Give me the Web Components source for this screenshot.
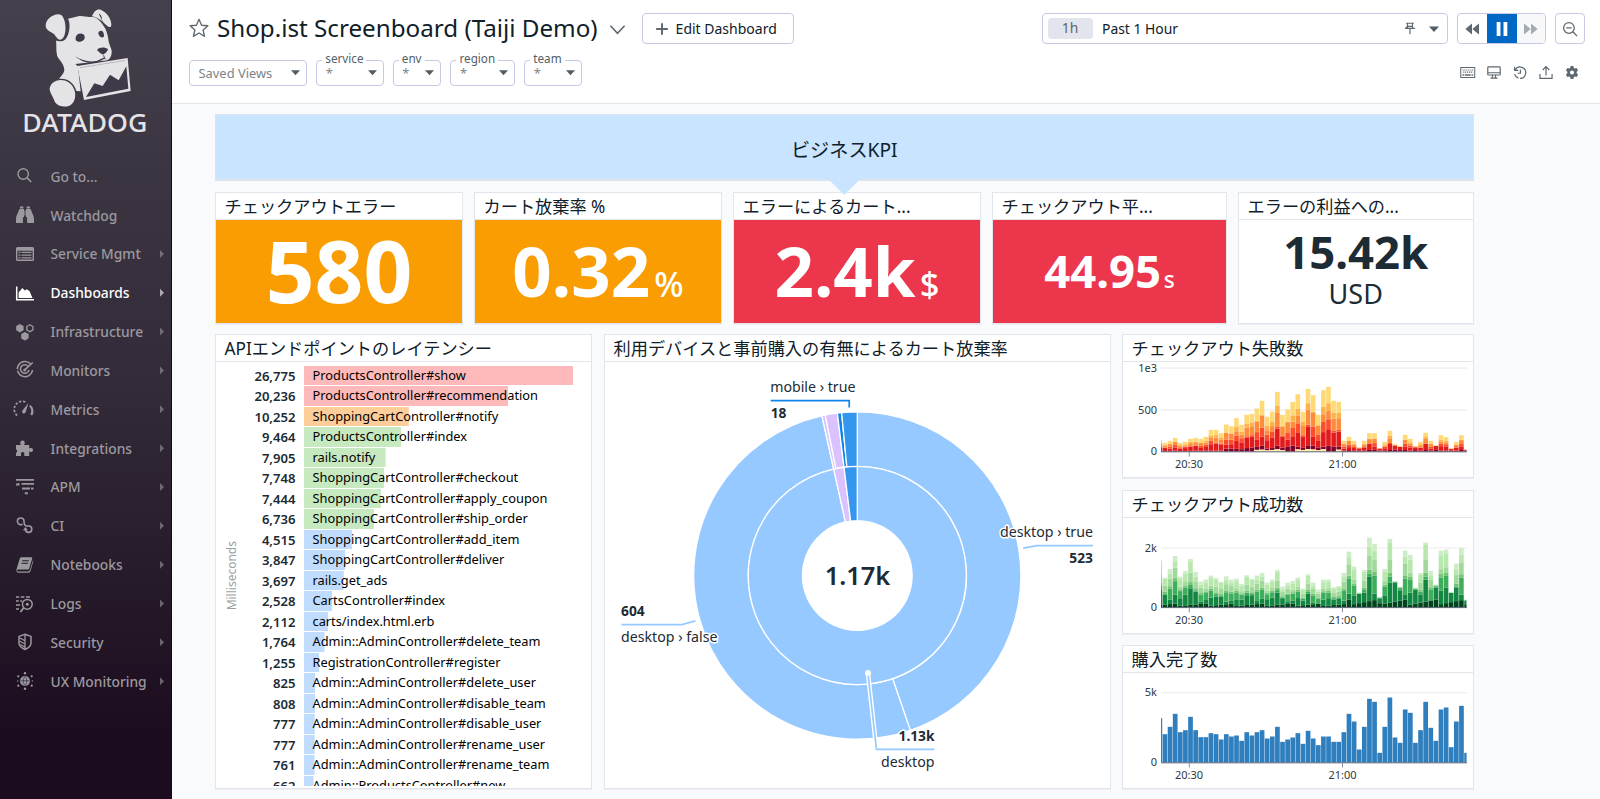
<!DOCTYPE html>
<html lang="ja">
<head>
<meta charset="utf-8">
<title>Shop.ist Screenboard</title>
<style>
html,body{margin:0;height:100%;overflow:hidden}
body{font-family:"Noto Sans","Noto Sans CJK JP",sans-serif;color:#1c2b34;background:#f9fafc}
</style>
</head>
<body>
<dd-app></dd-app>
<script>
const define=(name,css,html,setup)=>{
  customElements.define(name,class extends HTMLElement{
    connectedCallback(){
      if(this.shadowRoot)return;
      const r=this.attachShadow({mode:"open"});
      const h=typeof html==="function"?html(this):html;
      r.innerHTML=`<style>*{box-sizing:border-box}${css}</style>${h}`;
      if(setup)setup(this,r);
    }
  });
};

const ICONS={
search:'<circle cx="7.2" cy="7" r="5.2" fill="none" stroke="currentColor" stroke-width="1.4"/><path d="M11 10.8 15.2 15" stroke="currentColor" stroke-width="1.6" fill="none"/>',
binoculars:'<path d="M3.7 3H8v8.2H6.9V17H0v-4.2C0 9 2.600 6.500 2.800 4zM14.300 3H10v8.200h1.100V17H18v-4.200c0-3.800-2.600-6.300-2.800-8.800zM4 .6h3.400v1.800H4zM10.600.6H14v1.800h-3.400zM8.400 4.500h1.200v5H8.400z" fill="currentColor"/>',
service:'<path d="M1.5 2h15A1.500 1.500 0 0 1 18 3.500v11a1.500 1.500 0 0 1-1.500 1.500h-15A1.500 1.500 0 0 1 0 14.500v-11A1.500 1.500 0 0 1 1.500 2zM1.400 5.800v8.700h15.200V5.800z" fill="currentColor" fill-rule="evenodd"/><path d="M2.500 7.400h2M5.500 7.400h10M2.500 10.100h2M5.500 10.100h10M2.500 12.800h2M5.500 12.800h10" stroke="currentColor" stroke-width="1.300"/>',
dashboards:'<path d="M.7 2.500v13.300H18" stroke="currentColor" stroke-width="1.500" fill="none"/><path d="M2.600 14V8.600L6.300 4l2.600 2.500 2-1.200 2.700 2 2.900 6.700z" fill="currentColor"/>',
infra:'<path d="M3.900.9l3.700 2.100v4.300L3.900 9.400.2 7.300V3zM8.900 9l3.700 2.100v4.300l-3.700 2.100-3.700-2.100v-4.300z" fill="currentColor"/><path d="M13.900 1.700l3.100 1.800v3.400l-3.100 1.800-3.100-1.800V3.500z" fill="none" stroke="currentColor" stroke-width="1.300"/>',
monitors:'<path d="M14.600 2.900A7.600 7.600 0 1 0 16.500 9M12.200 5.400A4.300 4.300 0 1 0 13 9" fill="none" stroke="currentColor" stroke-width="1.500"/><path d="M8.500 9.200 16.800 1.500" stroke="currentColor" stroke-width="1.600"/><circle cx="8.700" cy="9" r="1.500" fill="currentColor"/><path d="M0 9h2.500" stroke="#352e3a" stroke-width="1.500"/>',
metrics:'<path d="M1.100 15.500A8 8 0 0 1 10.500 2.600" fill="none" stroke="currentColor" stroke-width="1.700" stroke-dasharray="2.400 1.600"/><path d="M14.200 4.800A8 8 0 0 1 16.300 15.500L14.300 14.500A7 7 0 0 0 13.300 6.500z" fill="currentColor"/><path d="M12.500 3 9.800 11.800A1.900 1.900 0 1 1 6.800 10z" fill="currentColor"/>',
puzzle:'<path d="M0 6h5.200c-.9-.8-1-1.300-1-2.200a2.300 2.300 0 0 1 4.600 0c0 .9-.2 1.400-1 2.200h5.400v3.800c.8-.8 1.300-.7 2.400-.7a2.100 2.100 0 0 1 0 4c-1.100 0-1.600 0-2.400-.8V17H8.300v-2.800a1.700 1.700 0 0 0-3.300 0V17H0v-3.500h1v-2.800H0z" fill="currentColor"/>',
apm:'<path d="M0 1.900h18M2 5.900h1M5.500 5.900h12.500M6 10.500h8M8.800 15.300h3" stroke="currentColor" stroke-width="1.900" fill="none"/><path d="M0 6.500h3.500M15 10.500h2.500" stroke="currentColor" stroke-width="1.800"/>',
ci:'<path d="M6.600 7.600H4.700A3.300 3.300 0 1 1 8 4.300c0 2.500 0 4.700 3 4.700h1.600a3.200 3.200 0 1 1-3.200 3.200" fill="none" stroke="currentColor" stroke-width="1.600"/><path d="M6.900 13.200 9.400 10l2.500 3.200z" fill="currentColor"/>',
notebook:'<path d="M5.500 1.300h9.700a1 1 0 0 1 1 1.300l-3 9.800a1.500 1.500 0 0 1-1.400 1H2.200c-1.500 0-1.500 2 0 2h9.700c1 0 1.700-.4 2-1.300l3-9.600c.5.300.4.800.2 1.400l-2.600 9a2.700 2.700 0 0 1-2.600 1.900H2.900C.8 16.800-.1 15 .6 13L3.800 2.600a1.800 1.800 0 0 1 1.700-1.300z" fill="currentColor"/><path d="M6.300 4.700h6.500M5.600 7.200h6.500" stroke="#261c2a" stroke-width="1.100"/>',
logs:'<path d="M0 2h3.200M4.800 2h3.600M10 2h4M0 6h2.800M4.200 6h1.800M0 10h4M0 14h3" stroke="currentColor" stroke-width="1.700"/><circle cx="11.300" cy="9.300" r="4.900" fill="none" stroke="currentColor" stroke-width="1.500"/><path d="M7.500 13 4.500 17" stroke="currentColor" stroke-width="1.800"/><circle cx="11.300" cy="9.300" r="1.500" fill="currentColor"/>',
security:'<path d="M9 1.200 15 3.400v6.400c0 3.500-3.200 5.600-6 6.700-2.800-1.100-6-3.200-6-6.700V3.400z" fill="none" stroke="currentColor" stroke-width="1.500"/><path d="M9 2v14M4 5l4.500 2.500M4 8.200l4.500 2.500M4.500 11.500 8.500 14" stroke="currentColor" stroke-width="1.300"/>',
ux:'<circle cx="9" cy="9" r="5" fill="currentColor"/><path d="M4.500 8.800h9M9 4.500c-2.500 3-2.500 6 0 9M9 4.500c2.500 3 2.500 6 0 9" stroke="#241828" stroke-width=".6" fill="none"/><g fill="currentColor"><circle cx="9" cy="1.300" r="1.200"/><circle cx="9" cy="16.700" r="1.200"/><circle cx="2.300" cy="4.300" r="1.100"/><circle cx="15.700" cy="4.300" r="1.100"/><circle cx="2.300" cy="13.700" r="1.100"/><circle cx="15.700" cy="13.700" r="1.100"/><circle cx="1.700" cy="9" r=".7"/><circle cx="16.300" cy="9" r=".7"/></g>',
star:'<path d="M9 1.200l2.300 5.300 5.700.5-4.300 3.800 1.300 5.700L9 13.500 4 16.500l1.300-5.700L1 7l5.700-.5z" fill="none" stroke="currentColor" stroke-width="1.200" stroke-linejoin="round"/>',
chevron:'<path d="M1.500 5 9 13l7.500-8" fill="none" stroke="currentColor" stroke-width="1.700"/>',
plus:'<path d="M9 1.500v15M1.500 9h15" stroke="currentColor" stroke-width="2.500"/>',
caret:'<path d="M0 4.500h18L9 14.500z" fill="currentColor"/>',
pin:'<path d="M4 2.200h10M5.800 2.200v6M12.200 2.200v6M2.500 8.900h13M4.500 8.900V6.500M9 9v7.500M5.800 6.200h6.400" fill="none" stroke="currentColor" stroke-width="1.500"/>',
rew:'<path d="M9 2v14L.5 9zM18 2v14L9.500 9z" fill="currentColor"/>',
ffw:'<path d="M0 2v14l8.500-7zM9 2v14l8.500-7z" fill="currentColor"/>',
pause:'<path d="M3 1h4.300v16H3zM10.700 1H15v16h-4.300z" fill="currentColor"/>',
zoomout:'<circle cx="7.800" cy="7.800" r="6" fill="none" stroke="currentColor" stroke-width="1.400"/><path d="M12.200 12.200 17 17M4.800 7.800h6" stroke="currentColor" stroke-width="1.500"/>',
keyboard:'<rect x=".6" y="3" width="16.800" height="12" fill="none" stroke="currentColor" stroke-width="1.200"/><path d="M2.600 6h13M3.600 8.600h12" stroke="currentColor" stroke-width="1.400" stroke-dasharray="1.300 1"/><path d="M2.600 12h2M5.500 12h7M13.500 12h2" stroke="currentColor" stroke-width="1.600"/>',
monitor:'<rect x="1" y="1.800" width="16" height="10.400" rx="1" fill="none" stroke="currentColor" stroke-width="1.500"/><path d="M1 9.300h16M7 12v3.500M11 12v3.500M4.500 16.200h9" stroke="currentColor" stroke-width="1.400"/>',
history:'<path d="M2 1.500v4.800h4.800M2.600 6A7.300 7.300 0 1 1 9 16.600M7 16.300A7.500 7.500 0 0 1 2 11" fill="none" stroke="currentColor" stroke-width="1.500"/><path d="M9.500 5v5H6" fill="none" stroke="currentColor" stroke-width="1.500"/>',
upload:'<path d="M1.200 11v5.600h15.600V11M9 13V2M4.800 5.800 9 1.500l4.200 4.300" fill="none" stroke="currentColor" stroke-width="1.500"/>',
gear:'<path fill-rule="evenodd" fill="currentColor" d="M7.200.8h3.600l.5 2.400 1.400.8 2.300-.8 1.800 3.100-1.800 1.700v2l1.800 1.700-1.800 3.100-2.300-.8-1.400.8-.5 2.400H7.200l-.5-2.400-1.400-.8-2.300.8-1.800-3.100L3 10V8L1.200 6.300 3 3.200l2.300.8 1.400-.8zM9 6.400a2.600 2.600 0 1 0 0 5.200 2.600 2.600 0 0 0 0-5.200z"/>'
};
define("dd-icon",":host{display:inline-flex;flex:none;width:18px;height:18px}svg{width:100%;height:100%;overflow:visible}",
  e=>`<svg viewBox="0 0 18 18">${ICONS[e.getAttribute("name")]}</svg>`);

define("dd-logo",":host{display:block;height:140px}svg{display:block;width:171px;height:140px}text{font-family:'Noto Sans';font-weight:500}",
`<svg viewBox="0 0 513 420">
<g fill="#e4e3e6">
<path d="M168 121C170 140 168 155 171 163C169 167 176 176 180 181C187 189 193 201 193 210C192 221 182 229 177 237C199 233 222 247 229 273L242 274L234 200C248 201 266 203 280 199C296 194 305 189 318 184C330 178 336 167 335 152C333 143 329 135 326 125C325 113 322 101 317 88C308 71 298 60 288 53L276 50C261 53 246 45 235 49L204 56C214 73 207 116 190 122C181 125 171 124 168 121Z"/>
<path d="M148 54C157 46 173 39 184 45C195 56 198 77 196 94C194 109 189 119 180 119C170 118 166 102 156 98C147 93 137 87 137 77C137 66 142 60 148 54Z"/>
<path d="M276 48C281 37 287 29 297 28C311 32 325 43 332 62C336 77 334 84 325 80C318 75 310 69 306 61C306 50 303 44 296 40C298 48 306 58 306 64C297 55 287 52 276 48Z"/>
<path d="M182 240C164 241 148 252 149 270C153 285 162 295 165 307C173 319 193 323 208 317C223 310 229 291 224 272C218 253 203 240 182 240Z"/>
</g>
<path d="M226 192L233 198L252 300L392 273L383 174Z" fill="#40394a"/>
<path fill-rule="evenodd" fill="#e4e3e6" d="M232 198L383 174L392 273L252 300ZM258 291L283 250L308 258L330 224L356 241L379 199L385 266Z"/>
<path d="M243 204L378 182L376 190L356 233L329 217L306 252L280 244L251 281Z" fill="#e4e3e6"/>
<path d="M240 203L376 181.500" stroke="#40394a" stroke-width="2" opacity=".35"/>
<g fill="#40394a">
<path d="M227 113C228 103 240 96 252 104C260 119 245 126 236 125C229 124 225 119 227 113Z"/>
<path d="M295 99C298 88 313 91 312 108C311 116 296 113 295 99Z"/>
<path d="M291 150C300 139 316 142 324 147C322 156 314 163 306 163C300 159 295 154 291 151Z"/>
<path d="M226 169C245 187 268 191 290 188L312 177L321 178L311 173L290 183C268 187 244 182 226 169ZM310 160L315 174L311 175Z"/>
</g>
<text x="67" y="396" font-size="76" fill="#e4e3e6" textLength="375" lengthAdjust="spacingAndGlyphs">DATADOG</text>
</svg>`);

define("dd-nav-item",`:host{display:flex;align-items:center;height:38.85px;padding:0 7px 0 16px;color:#9c999f;font-size:13.800px;font-weight:500}
:host([active]){color:#fff}span{flex:1;padding-left:16.500px;white-space:nowrap}i{width:4px;height:8px;background:currentColor;opacity:.6;clip-path:polygon(0 0,100% 50%,0 100%)}`,
e=>`<dd-icon name="${e.getAttribute("icon")}"></dd-icon><span><slot></slot></span>${e.hasAttribute("leaf")?"":"<i></i>"}`);

const NAV=[["search","Go to...",1],["binoculars","Watchdog",1],["service","Service Mgmt"],["dashboards","Dashboards"],["infra","Infrastructure"],["monitors","Monitors"],["metrics","Metrics"],["puzzle","Integrations"],["apm","APM"],["ci","CI"],["notebook","Notebooks"],["logs","Logs"],["security","Security"],["ux","UX Monitoring"]];
define("dd-sidebar",":host{display:block;width:172px;background:linear-gradient(#463f4c 0,#3b3441 22%,#332b39 48%,#261b2a 72%,#1c0c1f 92%);border-right:1px solid #150818}nav{padding-top:16.800px}",
`<dd-logo></dd-logo><nav>${NAV.map(n=>`<dd-nav-item icon="${n[0]}" ${n[2]?"leaf":""} ${n[1]==="Dashboards"?"active":""}>${n[1]}</dd-nav-item>`).join("")}</nav>`);

define("dd-select",`:host{display:block;flex:none;position:relative;height:26px;border:1px solid #c6c9e4;border-radius:4px;color:#7c848a;font-size:12.900px;background:#fff}
.v{display:flex;align-items:center;justify-content:space-between;height:100%;padding:0 6px 1px 8.500px}
label{position:absolute;left:5px;top:-10px;padding:0 3px;background:#fff;font-size:11.700px;line-height:15px;color:#545e66}
dd-icon{width:9px;height:9px;color:#525d66}`,
e=>`${e.getAttribute("label")?`<label>${e.getAttribute("label")}</label>`:""}<div class="v"><slot></slot><dd-icon name="caret"></dd-icon></div>`);

define("dd-time-picker",`:host{display:flex;align-items:center;width:406.500px;height:31px;border:1px solid #c6c9e4;border-radius:4px;padding:0 8px 0 5px;font-size:13.900px;color:#0f2029}
b{font-weight:400;width:45px;height:21px;line-height:20px;text-align:center;background:#e3e5ee;border-radius:4px;color:#5b666e;margin-right:9.500px}
span{flex:1}.p{width:14px;height:15px;color:#5d6870;margin-right:12.500px}.c{width:10px;height:10px;color:#525d66}`,
`<b>1h</b><span>Past 1 Hour</span><dd-icon class="p" name="pin"></dd-icon><dd-icon class="c" name="caret"></dd-icon>`);

define("dd-playback",`:host{display:flex;width:89px;height:31px;border:1px solid #c6c9e4;border-radius:4px;overflow:hidden}
div{flex:1;display:grid;place-items:center;color:#5d6870}.on{flex:none;width:30px;background:#0067c5;color:#fff;margin:-1px 0}.off{background:#f7f8fa;color:#a4abb0}
dd-icon{width:14px;height:16px}`,
`<div><dd-icon name="rew"></dd-icon></div><div class="on"><dd-icon name="pause" style="width:16px"></dd-icon></div><div class="off"><dd-icon name="ffw"></dd-icon></div>`);

define("dd-header",`:host{display:flex;justify-content:space-between;height:104px;background:#fff;border-bottom:1px solid #e3e5ea;padding:0 15px 0 17px}
.row{display:flex;align-items:center}.top{height:31px;margin-top:13px}
h1{margin:-1px 0 0 8px;font-size:24.200px;font-weight:400;line-height:30px;color:#0f2029;white-space:nowrap}
.star{width:20px;height:20px;color:#5d6870;margin-top:-1px}.chev{width:17px;height:17px;color:#5d6870;margin:2px 16px 0 11px}
.edit{display:flex;align-items:center;gap:7px;height:31px;width:152px;padding-left:12px;border:1px solid #c6c9e4;border-radius:4px;font-size:14px;color:#0f2029;white-space:nowrap}
.edit dd-icon{width:14px;height:14px;color:#5d6870}
.filters{gap:9px;margin-top:16px}
.right{display:flex;flex-direction:column;align-items:flex-end}.right .top{gap:9px}
.z{width:30px;height:31px;display:grid;place-items:center;border:1px solid #c6c9e4;border-radius:4px;color:#5d6870}.z dd-icon{width:16px;height:16px}
.tools{gap:12px;margin:21px 6px 0 0;color:#5d6870}.tools dd-icon{width:14px;height:15px}.tools .k{width:15.500px}`,
`<div><div class="row top"><dd-icon class="star" name="star"></dd-icon><h1>Shop.ist Screenboard (Taiji Demo)</h1><dd-icon class="chev" name="chevron"></dd-icon><div class="edit"><dd-icon name="plus"></dd-icon>Edit Dashboard</div></div>
<div class="row filters"><dd-select style="width:118.300px">Saved Views</dd-select><dd-select label="service" style="width:67.500px">*</dd-select><dd-select label="env" style="width:48.700px">*</dd-select><dd-select label="region" style="width:64.800px">*</dd-select><dd-select label="team" style="width:57.700px">*</dd-select></div></div>
<div class="right"><div class="row top"><dd-time-picker></dd-time-picker><dd-playback></dd-playback><div class="z"><dd-icon name="zoomout"></dd-icon></div></div>
<div class="row tools"><dd-icon class="k" name="keyboard"></dd-icon><dd-icon name="monitor"></dd-icon><dd-icon name="history"></dd-icon><dd-icon name="upload"></dd-icon><dd-icon name="gear"></dd-icon></div></div>`);

define("dd-banner",`:host{position:relative;z-index:1;display:grid;place-items:center;height:67px;background:#c9e4ff;border:1px solid #dde3ec;border-bottom-width:2px;font-size:19.200px;color:#0f2029;padding-top:3px}
i{position:absolute;left:50%;top:100%;margin:-1px 0 0 -17px;width:34px;height:17px;background:#c9e4ff;clip-path:polygon(0 0,100% 0,50% 100%)}`,`<slot></slot><i></i>`);

define("dd-widget",`:host{display:flex;flex-direction:column;background:#fff;border:1px solid #e3e5ec;box-shadow:0 1px 0 #eceef3;min-width:0;min-height:0}
h2{flex:none;margin:0;height:27px;line-height:27px;padding:0 9px 0 8.500px;font-size:17.200px;font-weight:400;color:#0f2029;border-bottom:1px solid #e3e5ec;white-space:nowrap;overflow:hidden}
div{flex:1;min-height:0;overflow:hidden;display:flex}::slotted(*){flex:1;min-width:0}`,
e=>`<h2>${e.getAttribute("name")}</h2><div><slot></slot></div>`);

define("dd-query-value",`:host{display:flex;align-items:center;justify-content:center}
.n{display:flex;align-items:baseline;line-height:1;font-weight:700;white-space:nowrap;margin-top:-1px}.u{font-weight:500}
:host([stack]) .n{flex-direction:column;align-items:center}`,
e=>{const s=+e.getAttribute("size"),st=e.hasAttribute("stack");
return `<div class="n" style="font-size:${s}px"><span>${e.getAttribute("value")}</span>${e.getAttribute("unit")?`<span class="u" style="font-size:${st?27:s/2}px;${st?"font-weight:400;line-height:37px":"margin-left:"+s*.06+"px"}">${e.getAttribute("unit")}</span>`:""}</div>`});

const TOP=[[26775,"ProductsController#show"],[20236,"ProductsController#recommendation"],[10252,"ShoppingCartController#notify"],[9464,"ProductsController#index"],[7905,"rails.notify"],[7748,"ShoppingCartController#checkout"],[7444,"ShoppingCartController#apply_coupon"],[6736,"ShoppingCartController#ship_order"],[4515,"ShoppingCartController#add_item"],[3847,"ShoppingCartController#deliver"],[3697,"rails.get_ads"],[2528,"CartsController#index"],[2112,"carts/index.html.erb"],[1764,"Admin::AdminController#delete_team"],[1255,"RegistrationController#register"],[825,"Admin::AdminController#delete_user"],[808,"Admin::AdminController#disable_team"],[777,"Admin::AdminController#disable_user"],[777,"Admin::AdminController#rename_user"],[761,"Admin::AdminController#rename_team"],[662,"Admin::ProductsController#new"]];
define("dd-toplist",`:host{display:flex;padding:3.500px 18px 0 0;margin-bottom:2px;font-size:12.800px;overflow:hidden}
.u{width:30px;display:flex;align-items:center;justify-content:center;font-size:12px;color:#9aa1a6}.u span{writing-mode:vertical-rl;transform:rotate(180deg)}
.l{flex:1}.r{display:flex;align-items:center;height:20.510px}b{width:49.500px;text-align:right;font-weight:600;font-size:13.100px;margin-right:8.500px}
.t{flex:1;height:19.500px;line-height:19px;padding-left:8.500px;white-space:nowrap;color:#000;margin-bottom:1px}`,
()=>`<div class="u"><span>Milliseconds</span></div><div class="l">${TOP.map(([v,n])=>{const c=v>2e4?"#febaba":v>1e4?"#fdcd9a":v>6e3?"#c7e9bf":"#bfdbfd";const w=(3+v/26775*267)/2.7;
return `<div class="r"><b>${v.toLocaleString("en-US")}</b><div class="t" style="background:linear-gradient(${c},${c}) 0 0/${w}% 100% no-repeat">${n}</div></div>`}).join("")}</div>`);

const CX=857.3,CY=576;
const pt=(r,a)=>{const t=a*Math.PI/180;return (CX+r*Math.sin(t)).toFixed(2)+" "+(CY-r*Math.cos(t)).toFixed(2)};
const arc=(r0,r1,a,b,f)=>{const l=b-a>180?1:0;return `<path d="M${pt(r1,a)}A${r1} ${r1} 0 ${l} 1 ${pt(r1,b)}L${pt(r0,b)}A${r0} ${r0} 0 ${l} 0 ${pt(r0,a)}Z" fill="${f}"/>`};
define("dd-sunburst",`:host{display:block}svg{display:block;width:100%;height:100%}text{font-size:14.200px;fill:#1c2b34;paint-order:stroke;stroke:#fff;stroke-width:3px;stroke-linejoin:round}.b{font-weight:700;font-size:13.800px}.m{font-size:25.500px;font-weight:600;stroke:none}.e{text-anchor:end}`,
()=>`<svg viewBox="605 362 505 427"><g stroke="#fff" stroke-width="1.300">
${arc(109.300,164,0,161.100,"#96c9ff")}${arc(109.300,164,161.100,347.500,"#96c9ff")}${arc(109.300,164,347.500,348.700,"#d9c2ff")}${arc(109.300,164,348.700,353,"#d9c2ff")}${arc(109.300,164,353,354.500,"#0c85e8")}${arc(109.300,164,354.500,360,"#3496ed")}
${arc(55,109.300,0,347.500,"#96c9ff")}${arc(55,109.300,347.500,353,"#d9c2ff")}${arc(55,109.300,353,360,"#3496ed")}</g>
<g fill="none" stroke="#96c9ff" stroke-width="1.700"><path d="M621 625.300h60.500l13.500-3.800M1093.500 546h-56l-14 2.500"/><path d="M770.500 400.700h78.700v6.800" stroke="#0c85e8"/>
<path d="M868 674l8.500 76.300" stroke="#fff" stroke-width="4.500"/><path d="M868 674l8.500 76.300h58.200"/></g><circle cx="868" cy="673.700" r="2.900" fill="#fff"/>
<text class="m" x="857.500" y="585.500" text-anchor="middle">1.17k</text>
<text x="770" y="392">mobile › true</text><text class="b" x="770.500" y="418.500">18</text>
<text class="e" x="1093.500" y="537.300">desktop › true</text><text class="b e" x="1093.500" y="563.500">523</text>
<text class="b" x="620.500" y="616.800">604</text><text x="620.500" y="642.800">desktop › false</text>
<text class="b e" x="934.700" y="742">1.13k</text><text class="e" x="934.700" y="768">desktop</text></svg>`);

/* Bar heights in thirds of a pixel above the axis, one per minute. */
const DATA={
fail:[35,26,32,41,26,29,38,41,38,44,65,65,55,81,76,100,80,110,113,129,152,104,120,179,110,126,149,172,119,188,169,110,184,194,152,149,32,44,32,13,32,55,55,10,29,62,23,17,50,38,17,29,56,32,19,49,43,10,29,49,6],
ok:[141,89,115,154,92,109,145,106,77,83,95,88,76,93,83,86,70,96,85,95,103,74,83,112,62,74,79,89,56,99,74,53,83,83,60,63,103,167,122,44,112,209,190,31,115,205,79,62,170,157,59,103,194,109,68,170,173,46,131,178,23],
buy:[133,85,107,146,91,97,137,97,76,76,88,85,69,85,78,81,65,91,81,91,97,72,78,107,62,69,75,88,56,95,72,52,78,78,62,62,91,146,123,39,107,191,182,29,107,195,75,59,159,149,59,97,182,104,65,159,165,46,123,170,29]};
const PAL={fail:["#ffeda0","#800026","#e31a1c","#fc4e2a","#fd8d3c","#feb24c","#fed976"],ok:["#00441b","#138641","#3fae5c","#74c476","#a1d99b","#b9e8ae","#cdedc6"],buy:["#2f7fbf"]};
/* Cumulative shares of each stacked layer, from the axis up. */
const shares=(k,i,v)=>{
  const j=n=>((i*37+n*23)%17)/17-.5;
  if(k==="fail"){
    const low=i>=17&&i<36&&i%8!==1&&i%8!==2?.04:0;
    if(i>35&&v<25)return [0,.25,.75+j(1)*.3,.8,.85,.9,1];
    const d=i>35?.08:i>12?.1:.05;
    return [low,d+j(1)*.04,.34+j(2)*.16,.46+j(3)*.1,.66+j(4)*.12,.74+j(5)*.08,1];
  }
  const d=Math.min(.4,(i>36?17:8)/v*(1+j(1)));
  if(i>37&&v<82)return [d,.9+j(2)*.15,.93,.96,.98,.99,1];
  return [d,Math.max(d,.32+j(2)*.28),.5+j(3)*.1,.56+j(3)*.1,.72+j(4)*.12,.92+j(5)*.1,1];
};
define("dd-bars",`:host{display:block}svg{display:block;width:100%;height:100%}text{font-size:11px;fill:#2c3a43}`,
e=>{const k=e.getAttribute("series"),base=+e.getAttribute("base"),ticks=JSON.parse(e.getAttribute("ticks")),pal=PAL[k];let s="";
ticks.forEach(([y,t])=>{s+=`<path d="M1161 ${y}h306" stroke="#efeff1" stroke-width="1.300"/><text x="1157" y="${y+3.700}" text-anchor="end">${t}</text>`});
DATA[k].forEach((v,i)=>{const x0=i?1162.600+(i-1)*5.112:1161,x1=Math.min(1467,1162.600+i*5.112),h=v/3;
 if(pal.length===1){s+=`<rect x="${x0}" y="${base-h}" width="${x1-x0-.4}" height="${h}" fill="${pal[0]}"/>`;return}
 let p=0;
 shares(k,i,v).forEach((q,n)=>{q=Math.max(p,q);s+=`<rect x="${x0}" y="${base-h*q}" width="${x1-x0-.5}" height="${h*(q-p)}" fill="${pal[n]}"/>`;p=q});});
s+=`<path d="M1161 ${base+.3}h306" stroke="#5c6273" stroke-width="1"/><path d="M1189.300 ${base}v5M1342.500 ${base}v5" stroke="#8a8fa0"/><text x="1189" y="${base+16.500}" text-anchor="middle">20:30</text><text x="1342.500" y="${base+16.500}" text-anchor="middle">21:00</text><text x="1157" y="${base+3.700}" text-anchor="end">0</text>`;
return `<svg viewBox="1123 ${e.getAttribute("top")} 350 115" preserveAspectRatio="xMinYMin slice">${s}</svg>`});

define("dd-board",`:host{display:flex;flex-direction:column;width:1258.500px;margin:10px 0 0 43px}
.k{display:flex;gap:11px;height:132px;margin-top:10.500px}.m{display:flex;gap:12px;height:455px;margin-top:10.500px}
.col{display:flex;flex-direction:column;gap:11.500px;width:351.500px;margin-left:-1px}.col dd-widget{flex:1 1 0}
.or{background:#f99d02;color:#fff}.re{background:#eb364b;color:#fff}`,
`<dd-banner>ビジネスKPI</dd-banner>
<div class="k">
<dd-widget style="width:248px" name="チェックアウトエラー"><dd-query-value class="or" size="85.500" value="580"></dd-query-value></dd-widget>
<dd-widget style="width:248px" name="カート放棄率 %"><dd-query-value class="or" size="69" value="0.32" unit="%"></dd-query-value></dd-widget>
<dd-widget style="width:248px" name="エラーによるカート..."><dd-query-value class="re" size="69" value="2.4k" unit="$"></dd-query-value></dd-widget>
<dd-widget style="width:235px" name="チェックアウト平..."><dd-query-value class="re" size="45.500" value="44.95" unit="s"></dd-query-value></dd-widget>
<dd-widget style="flex:1" name="エラーの利益への..."><dd-query-value size="45.500" value="15.42k" unit="USD" stack></dd-query-value></dd-widget>
</div>
<div class="m">
<dd-widget style="width:377px" name="APIエンドポイントのレイテンシー"><dd-toplist></dd-toplist></dd-widget>
<dd-widget style="width:507px" name="利用デバイスと事前購入の有無によるカート放棄率"><dd-sunburst></dd-sunburst></dd-widget>
<div class="col">
<dd-widget name="チェックアウト失敗数"><dd-bars series="fail" top="362" base="451.500" ticks='[[368,"1e3"],[410,"500"]]'></dd-bars></dd-widget>
<dd-widget name="チェックアウト成功数"><dd-bars series="ok" top="517.500" base="606.800" ticks='[[547.300,"2k"]]'></dd-bars></dd-widget>
<dd-widget name="購入完了数"><dd-bars series="buy" top="673" base="762.500" ticks='[[692.700,"5k"]]'></dd-bars></dd-widget>
</div></div>`);

define("dd-app",":host{display:flex;width:1600px;height:799px;overflow:hidden}dd-sidebar{flex:none}main{flex:1;min-width:0}",
`<dd-sidebar></dd-sidebar><main><dd-header></dd-header><dd-board></dd-board></main>`);
</script>
</body>
</html>
